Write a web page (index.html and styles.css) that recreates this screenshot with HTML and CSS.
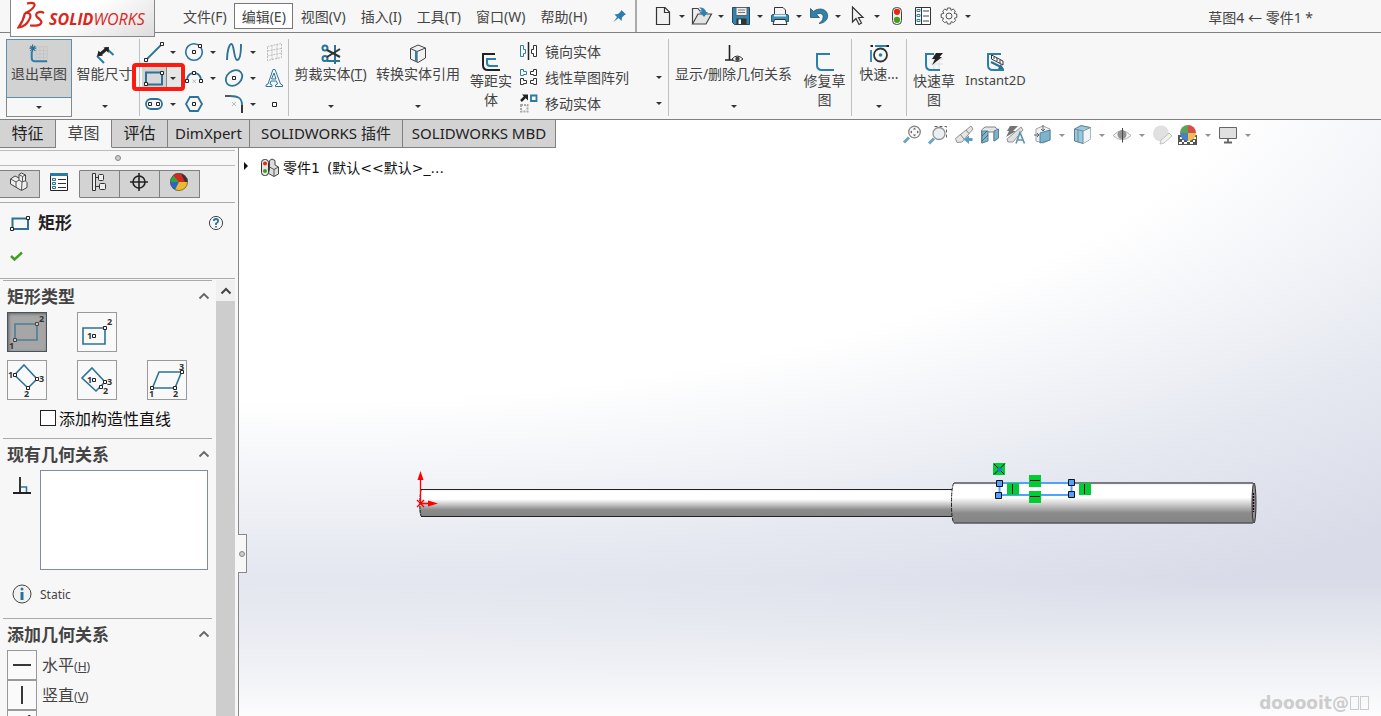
FILE: index.html
```html
<!DOCTYPE html>
<html lang="zh-CN">
<head>
<meta charset="utf-8">
<title>草图4 ← 零件1 *</title>
<link rel="stylesheet" href="styles.css">
</head>
<body>
<header class="topbar">
  <div class="logo">
    <svg width="28" height="28" viewBox="16 1 28 28" fill="none" stroke="#d9271c" stroke-width="2.2"><path d="M26 3.5C31 2 35 3 33 6.500C31 9.500 27 12 24 13C29 12 31 15 28 20C26 24 22 27 17.500 27.500C20 24 23 18 24 13"/><path d="M43 13C39 10.500 33 13 36 17C40 20 42 22 39 24.500C36 26.500 32 25.500 29 25.500"/></svg>
    <span class="brand"><b>SOLID</b>WORKS</span>
  </div>
  <nav class="menu">
    <button>文件(F)</button><button class="boxed">编辑(E)</button><button>视图(V)</button><button>插入(I)</button><button>工具(T)</button><button>窗口(W)</button><button>帮助(H)</button>
  </nav>
  <button class="pin" aria-label="固定"><svg width="14" height="14" viewBox="614 10 14 14"><path fill="#2a7fae" d="M622.500 11L627 15.500L625.500 16L623 18.500L622.500 22L619.500 19L614.500 23L618 18L615.500 15.500L619 15L621.700 12.500Z"/></svg></button>
  <div class="quick">
    <button aria-label="新建"><svg width="20" height="20" viewBox="653 7 20 20"><path d="M656.500 8.500H665L669.500 13V25.500H656.500ZM664.500 8.500V13.500H669.500" fill="#f1f1f1" stroke="#333" stroke-width="1.200"/></svg></button><i class="caret"></i>
    <button aria-label="打开"><svg width="22" height="20" viewBox="691 7 22 20"><path d="M692.500 25V9.500H698L700 12H705V15" fill="#eee" stroke="#444" stroke-width="1.200"/><path d="M692.500 25L698 15H711.500L706 25Z" fill="#e5e5e5" stroke="#444" stroke-width="1.200"/><path d="M699 8.500C704 8.500 705.500 10.500 705.500 13H708L704 18L699.500 13H702C702 11 701 10 699 8.500Z" fill="#2a84b3"/></svg></button><i class="caret"></i>
    <button aria-label="保存"><svg width="20" height="20" viewBox="731 7 20 20"><path d="M732.500 8.500H749.500V25.500H734.500L732.500 23.500Z" fill="#3484ad" stroke="#1f4960"/><path d="M736 8.500H747V16.500H736Z" fill="#eee" stroke="#58656c"/><path d="M738 11H745M738 13.500H745" stroke="#777"/><path d="M736.500 19.500H746.500V25.500H736.500Z" fill="#333"/><path d="M738.500 20.500H741V25H738.500Z" fill="#fff"/></svg></button><i class="caret"></i>
    <button aria-label="打印"><svg width="20" height="20" viewBox="770 7 20 20"><path d="M774.500 16V8.500H783L785.500 11V16" fill="#f5f5f5" stroke="#333"/><path d="M771.500 17Q771.500 15.500 773 15.500H787Q788.500 15.500 788.500 17V22.500H771.500Z" fill="#3b90ba" stroke="#1e5d7d"/><path d="M774 15.500H786V17.500H774Z" fill="#e7f3f9"/><path d="M774.500 20.500H785.500L787 25.500H773Z" fill="#f8f8f8" stroke="#333"/></svg></button><i class="caret"></i>
    <button aria-label="撤消"><svg width="20" height="20" viewBox="809 7 20 20"><path d="M810.500 9.500V18.500H819.500L816.500 15.500C820 13 824 15 823 19C822.500 21.500 821 23 819 24.500C825 24 828.500 20 827.500 15.500C826.500 10 819 8 813.500 12.500Z" fill="#3181a8" stroke="#23566f" stroke-width=".8"/></svg></button><i class="caret"></i>
    <button aria-label="选择"><svg width="20" height="20" viewBox="848 7 20 20"><path d="M852.500 8V23L856 19.500L859 25.500L861.500 24L858.500 18.500H863Z" fill="#f3f3f3" stroke="#333" stroke-width="1.200"/></svg></button><i class="caret"></i>
    <button aria-label="重建"><svg width="20" height="20" viewBox="888 7 20 20"><rect x="893.500" y="8.500" width="9" height="17" rx="4" fill="#eee" stroke="#444"/><circle cx="898" cy="12.800" r="3.100" fill="#e52a10"/><circle cx="898" cy="20.800" r="3.100" fill="#3fa01d"/></svg></button>
    <button class="wide" aria-label="选项列表"><svg width="20" height="20" viewBox="914 7 20 20"><path d="M916.500 8.500H931.500V25.500H916.500ZM922.500 8.500V25.500" fill="#fff" stroke="#333"/><path d="M918 10.500H921V12.500H918ZM918 15.500H921V17.500H918ZM918 20.500H921V22.500H918Z" fill="#fff" stroke="#2b80a8"/><path d="M924 12H930M924 17H930M924 22H930" stroke="#444"/></svg></button>
    <button aria-label="设置"><svg width="20" height="20" viewBox="-10 -10 20 20" fill="none" stroke="#555"><circle r="3"/><path d="M-1.500-8H1.500L2-5.600L4.200-7L6.300-5L5.200-2.600L7.800-2V1.500L5.500 2.200L6.500 4.600L4.500 6.600L2.200 5.600L1.500 8H-1.500L-2.200 5.600L-4.500 6.600L-6.500 4.600L-5.500 2.200L-7.800 1.500V-2L-5.200-2.600L-6.300-5L-4.200-7L-2-5.600Z"/></svg></button><i class="caret"></i>
  </div>
  <h1 class="doc">草图4 ← 零件1 *</h1>
</header>

<section class="ribbon">
  <div class="group">
    <div class="exit">
      <button><svg width="20" height="20" viewBox="28 43 22 22" fill="none"><path d="M36 46H48M36 50H48M36 54H48M36 58H48M36 46V60M40 46V60M44 46V60M48 46V60" stroke="#bbb" stroke-width=".6"/><path d="M31 51V58Q31 62 35 62H48" stroke="#2b7da5" stroke-width="2.200"/><path d="M32 43.500V51.500M28.500 47.500H36M29.500 45L35 50.500M35 45L29.500 50.500" stroke="#2b6f93" stroke-width="1.300"/></svg>退出草图</button>
      <button aria-label="更多"><i class="caret"></i></button>
    </div>
    <button class="big dim"><svg width="20" height="20" viewBox="95 43 20 20"><path d="M97 55L104 62M105.500 46.500L113.500 54" stroke="#2b7ba2" stroke-width="2"/><path d="M97 55.500L98.500 49.500L103 54.500ZM108.500 52L109 46L103.500 46.500Z" fill="#222"/><path d="M100 53.500L107 47.500" stroke="#222" stroke-width="3"/></svg><span>智能尺寸</span><i class="caret"></i></button>
  </div>
  <div class="group sketch">
    <div class="cell"><button aria-label="直线"><svg width="20" height="20" viewBox="144 42 20 20"><path d="M146.500 59.500L162 44" stroke="#2b7398" stroke-width="1.800"/><path d="M144.500 58.500H147.500V61.500H144.500ZM160.500 42.500H163.500V45.500H160.500Z" fill="#fff" stroke="#222"/></svg></button><i class="caret"></i></div>
    <div class="cell"><button aria-label="圆"><svg width="20" height="20" viewBox="184 42 20 20" fill="none"><circle cx="194" cy="52" r="8.300" stroke="#2b7398" stroke-width="1.600"/><path d="M192.500 50.500H195.500V53.500H192.500ZM198.500 44.500H201.500V47.500H198.500Z" fill="#fff" stroke="#222"/></svg></button><i class="caret"></i></div>
    <div class="cell"><button aria-label="样条曲线"><svg width="20" height="20" viewBox="224 42 20 20" fill="none"><path d="M227 60C227 52 229 44 231.500 44S234 60 237 60S241 52 241 44" stroke="#2b7398" stroke-width="1.900"/></svg></button><i class="caret"></i></div>
    <div class="cell"><button aria-label="基准面"><svg width="20" height="20" viewBox="264 42 20 20" fill="none"><path d="M267.500 46.500L281.500 43.500V57.500L267.500 60.500ZM267.500 51L281.500 48.500M267.500 56L281.500 53M272 45.500V60M277 44.500V59" stroke="#bbb" stroke-dasharray="2 1"/></svg></button></div>
    <div class="cell picked"><button aria-label="矩形"><svg width="20" height="20" viewBox="144 68 20 20"><path d="M146 72.500H162V84.500H146Z" fill="#d8d8d8" stroke="#2b7398" stroke-width="2"/><path d="M144.500 82.500H147.500V85.500H144.500ZM160.500 71.500H163.500V74.500H160.500Z" fill="#fff" stroke="#222"/></svg></button><i class="caret"></i></div>
    <div class="cell"><button aria-label="圆弧"><svg width="20" height="20" viewBox="184 68 20 20" fill="none"><path d="M187 79C188 75 190 73 194 73S200 75 201 79" stroke="#2b7398" stroke-width="1.800"/><path d="M185.500 79.500H188.500V82.500H185.500ZM192.500 71.500H195.500V74.500H192.500ZM199.500 79.500H202.500V82.500H199.500Z" fill="#fff" stroke="#222"/><path d="M192.500 79.500L196 83M196 79.500L192.500 83" stroke="#bbb"/></svg></button><i class="caret"></i></div>
    <div class="cell"><button aria-label="椭圆"><svg width="20" height="20" viewBox="224 68 20 20" fill="none"><ellipse cx="234" cy="78" rx="9" ry="7" transform="rotate(-40 234 78)" stroke="#2b7398" stroke-width="1.800"/><path d="M232.500 76.500H235.500V79.500H232.500Z" fill="#fff" stroke="#222"/></svg></button><i class="caret"></i></div>
    <div class="cell"><button aria-label="文字"><svg width="20" height="20" viewBox="264 68 20 20" fill="#fff" stroke="#2b7398" stroke-width="1"><path d="M266 86.500V85L268 84L273 69.500H275L280.500 84L282.500 85V86.500H275.500V85L277.500 84L276.500 81H271L270 84L272 85V86.500ZM271.500 79H276L274 73Z"/></svg></button></div>
    <div class="cell"><button aria-label="槽口"><svg width="20" height="20" viewBox="144 94 20 20"><rect x="146" y="99" width="16" height="10" rx="5" fill="none" stroke="#2b7398" stroke-width="1.800"/><path d="M148.500 102.500H151.500V105.500H148.500ZM156.500 102.500H159.500V105.500H156.500Z" fill="#fff" stroke="#222"/></svg></button><i class="caret"></i></div>
    <div class="cell"><button aria-label="多边形"><svg width="20" height="20" viewBox="184 94 20 20"><path d="M190 97H198L202 104L198 111H190L186 104Z" fill="none" stroke="#2b7398" stroke-width="1.800"/><path d="M192.500 102.500H195.500V105.500H192.500Z" fill="#fff" stroke="#222"/></svg></button></div>
    <div class="cell"><button aria-label="圆角"><svg width="20" height="20" viewBox="224 94 20 20" fill="none"><path d="M225 96H230" stroke="#222" stroke-width="1.500"/><path d="M230 96C238 96 242 98 242 105" stroke="#2b7398" stroke-width="1.800"/><path d="M242 105V113" stroke="#222" stroke-width="1.800"/><path d="M232 102L236 106M236 102L232 106" stroke="#bbb"/></svg></button><i class="caret"></i></div>
    <div class="cell"><button aria-label="点"><svg width="20" height="20" viewBox="264 94 20 20"><path d="M272.500 102.500H276.500V106.500H272.500Z" fill="#fff" stroke="#222"/></svg></button></div>
  </div>
  <div class="group">
    <button class="big trim"><svg width="20" height="20" viewBox="320 44 20 20" fill="none"><path d="M334 45V64M326 61H339" stroke="#2b7398" stroke-width="2"/><circle cx="324" cy="48" r="2.500" stroke="#2b7398" stroke-width="2"/><circle cx="324" cy="58.500" r="2.500" stroke="#2b7398" stroke-width="2"/><path d="M326 50L339 57M326 57L339 49" stroke="#333" stroke-width="2"/></svg><span>剪裁实体(<u>T</u>)</span><i class="caret"></i></button>
    <button class="big conv"><svg width="20" height="20" viewBox="408 44 20 20"><path d="M410.500 48.500L418 45L425.500 48V58L418 62.500L410.500 59Z" fill="#f1f1f1" stroke="#444"/><path d="M410.500 48.500L417 51.500L425.500 48M417 51.500V62" fill="none" stroke="#444"/><path d="M416 51L416 62" stroke="#2b80ab" stroke-width="2"/></svg><span>转换实体引用</span><i class="caret"></i></button>
    <button class="big tall off"><svg width="20" height="20" viewBox="481 50 20 20" fill="none"><path d="M495 53H483V64Q483 69 488 69H500" stroke="#222" stroke-width="2"/><path d="M496 58H487V62Q487 65 490 65H498" stroke="#2b80ab" stroke-width="2"/></svg><span>等距实体</span></button>
    <div class="list">
      <div><button><svg width="18" height="20" viewBox="520 42 18 20" fill="#fff"><path d="M528.500 43V61" stroke="#222" stroke-width="1.500"/><path d="M520.500 46.500H523.500V50.500H525.500V54.500H523.500V57.500H520.500Z" stroke="#2b80ab"/><path d="M536.500 46.500H533.500V50.500H531.500V54.500H533.500V57.500H536.500Z" stroke="#333"/></svg>镜向实体</button></div>
      <div><button><svg width="18" height="20" viewBox="520 68 18 20" fill="#fff" stroke="#333"><path d="M520.500 70.500H523.500V72.500H526.500V75.500H523.500V76.500H520.500Z" stroke="#2b80ab"/><path d="M536.500 70.500H533.500V72.500H530.500V75.500H533.500V76.500H536.500ZM520.500 79.500H523.500V81.500H526.500V84.500H523.500V85.500H520.500ZM536.500 79.500H533.500V81.500H530.500V84.500H533.500V85.500H536.500Z"/></svg>线性草图阵列</button><i class="caret"></i></div>
      <div><button><svg width="18" height="20" viewBox="520 94 18 20" fill="none"><path d="M521 102L526 97" stroke="#222" stroke-width="2.500"/><path d="M522 95.500H528V101.500Z" fill="#222"/><path d="M531 96.500H536.500V102H531Z" stroke="#2b7ba2" stroke-width="1.800"/><path d="M521 106H527.500V112.500H521Z" stroke="#aaa" stroke-width="2" stroke-dasharray="2 1"/></svg>移动实体</button><i class="caret"></i></div>
    </div>
  </div>
  <div class="group">
    <button class="big disp"><svg width="20" height="20" viewBox="723 44 20 20" fill="none"><path d="M728.500 45V60M724 60H733" stroke="#222" stroke-width="1.600"/><path d="M731 59Q736 53 742 59Q736 64 731 59Z" fill="#fff" stroke="#333"/><circle cx="736.500" cy="58.800" r="2.200" fill="#444"/></svg><span>显示/删除几何关系</span><i class="caret"></i></button>
    <button class="big tall fix"><svg width="20" height="20" viewBox="813 50 20 20" fill="none"><path d="M828 53H815V64Q815 69 820 69H832" stroke="#2b80ab" stroke-width="2"/></svg><span>修复草图</span></button>
  </div>
  <div class="group">
    <button class="big fast"><svg width="20" height="20" viewBox="867 44 20 20" fill="none"><path d="M869 50V62M873 46H886" stroke="#2b80ab" stroke-width="1.800"/><path d="M868.500 46H871M884.500 46H887" stroke="#222" stroke-width="2"/><circle cx="878.500" cy="55" r="6.500" stroke="#333" stroke-width="1.800"/><circle cx="878.500" cy="55" r="1.800" fill="#2b80ab"/></svg><span>快速...</span><i class="caret"></i></button>
  </div>
  <div class="group last">
    <button class="big tall off"><svg width="20" height="20" viewBox="923 50 20 20" fill="none"><path d="M930 58H942M930 63H942M933 54V69M938 54V69" stroke="#ddd"/><path d="M933 53H925V64Q925 69 930 69H939" stroke="#2b80ab" stroke-width="2"/><path d="M935 52H942L938.500 56H941L931 64L934 58H931Z" fill="#222"/></svg><span>快速草图</span></button>
    <button class="big tall inst"><svg width="20" height="20" viewBox="984 50 20 20" fill="none"><path d="M999 53H986V64Q986 69 991 69H1002" stroke="#2b80ab" stroke-width="2"/><path d="M989.500 54L1001 60V64L989.500 58ZM992 56V58M995 57V60M998 59V62" fill="#fff" stroke="#333"/><path d="M989 61L999 66" stroke="#2b6f93" stroke-width="2"/><path d="M1002 68L996 68L998.500 63Z" fill="#2b6f93"/></svg><span>Instant2D</span></button>
  </div>
</section>

<main class="work">
  <div class="strip">
    <nav class="tabs"><button>特征</button><button class="on">草图</button><button>评估</button><button class="latin dx">DimXpert</button><button class="latin addin">SOLIDWORKS 插件</button><button class="latin addin">SOLIDWORKS MBD</button></nav>
    <div class="views">
      <button aria-label="整屏显示"><svg width="22" height="22" viewBox="901 124 22 22"><path d="M904 142.500L909 137.500" stroke="#5b9cbd" stroke-width="3"/><circle cx="914.500" cy="132" r="5.800" fill="#f6f8f8" stroke="#777" stroke-width="1.300"/><path d="M914.500 127.500L916 129.500H913ZM914.500 136.500L916 134.500H913ZM910 132L912 130.500V133.500ZM919 132L917 130.500V133.500Z" fill="#555"/></svg></button>
      <button aria-label="局部放大"><svg width="22" height="22" viewBox="927 124 22 22"><path d="M934.500 126.500H946.500V138.500" fill="none" stroke="#555" stroke-dasharray="3 2"/><path d="M929 143.500L934 138.500" stroke="#5b9cbd" stroke-width="3"/><circle cx="939" cy="133.500" r="6" fill="#e7eef2" stroke="#888" stroke-width="1.300"/></svg></button>
      <button aria-label="上一视图"><svg width="22" height="22" viewBox="953 124 22 22"><path d="M971 126L973 129L962 142L957 142.500L955.500 138.500Z" fill="#e2e2e2" stroke="#888"/><path d="M960 134L964 139M966 130L969 133.500" stroke="#777"/><path d="M972.500 138V141H969V144L963.500 139.500L969 135.500V138Z" fill="#4b93b8"/></svg></button>
      <button aria-label="剖面视图"><svg width="22" height="22" viewBox="979 124 22 22"><path d="M981.500 130L985 127H995L998.500 130V138L994 141V132H987V141L981.500 143Z" fill="#e3e3e3" stroke="#777"/><path d="M982 131H988V141L982 143ZM994 131L998.500 129V138L994 141Z" fill="#72abc7" stroke="#4a7387"/><path d="M982 136L987 131M982 141L988 135" stroke="#315e75"/></svg></button>
      <button aria-label="动态注解"><svg width="22" height="22" viewBox="1005 124 22 22"><path d="M1010 126H1018L1013 131H1016L1006 137L1009 131H1007Z" fill="#666"/><path d="M1021 127L1023 130L1013 142L1008 142L1007 139Z" fill="#ddd" stroke="#888"/><path d="M1016 143.500L1020 132.500L1024.500 143.500M1018 140H1023" fill="none" stroke="#4b86a5" stroke-width="1.600"/></svg></button>
      <button aria-label="视图定向"><svg width="22" height="22" viewBox="1031 124 22 22"><path d="M1036 129L1043 126L1050 129V140L1043 143L1036 141Z" fill="#edf1f4" stroke="#999"/><path d="M1040 133L1050 130V140L1040 143Z" fill="#72abc7" stroke="#397998"/><path d="M1043 125V131M1041 129L1043 131L1045 129M1034 135H1039M1037 133L1039 135L1037 137" fill="none" stroke="#555"/></svg></button><i class="caret"></i>
      <button aria-label="显示样式"><svg width="22" height="22" viewBox="1071 124 22 22"><path d="M1074.500 129L1081 125.500L1090.500 127.500V139L1083 143.500L1074.500 141Z" fill="#8cc3db" stroke="#506d7b"/><path d="M1083 130L1090.500 127.500V139L1083 143.500Z" fill="#eef5f8"/><path d="M1074.500 129L1083 131L1090.500 127.500M1083 131V143M1078 130V142" fill="none" stroke="#5c7f90"/></svg></button><i class="caret"></i>
      <button aria-label="隐藏所有类型"><svg width="22" height="22" viewBox="1111 124 22 22"><path d="M1113 135.500Q1122 126.500 1131 135.500Q1122 144 1113 135.500Z" fill="#f4f4f4" stroke="#aaa"/><circle cx="1122" cy="134.500" r="4.500" fill="#888"/><path d="M1122.500 128V142.500" stroke="#333"/></svg></button><i class="caret"></i>
      <button aria-label="编辑外观"><svg width="22" height="22" viewBox="1151 124 22 22"><circle cx="1161" cy="133.500" r="8" fill="#ddd"/><path d="M1165 137L1169 133L1172 136L1164 143L1160 144L1161 140Z" fill="#f1f1f1" stroke="#bbb"/></svg></button>
      <button aria-label="应用布景"><svg width="22" height="22" viewBox="1177 124 22 22"><path d="M1178 135H1197V145H1178Z" fill="#444"/><path d="M1180 137H1182V139H1180ZM1179 142H1182V144H1179ZM1184 142H1187V144H1184ZM1190 142H1193V144H1190ZM1194 137H1196V139H1194ZM1187 140H1190V142H1187ZM1193 140H1195V142H1193ZM1182 140H1184V142H1182Z" fill="#fff"/><path d="M1188 133V125A8 8 0 0 0 1180 133Z" fill="#4a9a48"/><path d="M1188 133V125A8 8 0 0 1 1196 133Z" fill="#d53a32"/><path d="M1188 133H1180A8 8 0 0 0 1188 141Z" fill="#396fc2"/><path d="M1188 133H1196A8 8 0 0 1 1188 141Z" fill="#eab93b"/></svg></button><i class="caret"></i>
      <button aria-label="视图设定"><svg width="22" height="22" viewBox="1217 124 22 22"><path d="M1219.500 127.500H1236.500V138.500H1219.500Z" fill="#ddd" stroke="#555"/><path d="M1228 139V142M1224 142.500H1232" stroke="#555" stroke-width="1.800"/></svg></button><i class="caret"></i>
    </div>
  </div>

  <div class="body">
    <aside class="panel">
      <div class="grip"><i class="dot"></i></div>
      <nav class="modes">
        <button aria-label="设计树"><svg width="20" height="20" viewBox="9 172 20 20"><path d="M10.500 179L15 176L19 178V174.500L21.500 173L25.500 175V181L27 182.500V187.500L21.500 190.500L10.500 184Z" fill="#eee" stroke="#444"/><path d="M10.500 179L16 182L19 180V178M16 182V187M19 180L22 182L21.500 190M22 182L26 180.500M19 174.500L22.500 176.500L25.500 175M22.500 176.500V181.500" fill="none" stroke="#555"/></svg></button>
        <button class="on" aria-label="属性"><svg width="20" height="20" viewBox="48 172 20 20"><path d="M49.500 173.500H66.500V190.500H49.500Z" fill="#fff" stroke="#222"/><path d="M49 173H67V176H49Z" fill="#2b7ba2"/><path d="M51.500 178.500H54.500V180.500H51.500ZM51.500 182.500H54.500V184.500H51.500ZM51.500 186.500H54.500V188.500H51.500Z" fill="#fff" stroke="#2b6f93"/><path d="M57 179.500H65M57 183.500H65M57 187.500H65" stroke="#333"/></svg></button>
        <button aria-label="配置"><svg width="20" height="20" viewBox="88 172 20 20" fill="#eee" stroke="#333"><path d="M91.500 173.500H94.500V190.500H91.500Z"/><path d="M94.500 177.500H97M94.500 186.500H99" /><rect x="97.500" y="174.500" width="5" height="6" rx="1"/><rect x="98.500" y="183.500" width="6" height="6" rx="1"/></svg></button>
        <button aria-label="尺寸专家"><svg width="20" height="20" viewBox="128 172 20 20" fill="none" stroke="#222" stroke-width="1.600"><circle cx="138" cy="182" r="6"/><path d="M138 173V191M129 182H147"/></svg></button>
        <button aria-label="外观"><svg width="20" height="20" viewBox="168 171 20 20"><path d="M178 181L178 172A9 9 0 0 0 169 181Z" fill="#37a339"/><path d="M178 181V172A9 9 0 0 1 187 181Z" fill="#333"/><path d="M178 181H169A9 9 0 0 0 178 190Z" fill="#2a65c8"/><path d="M178 181H187A9 9 0 0 1 174 189Z" fill="#edba2c"/><path d="M172 174A9 9 0 0 1 180 172.500L184 181H178Z" fill="#d8271e"/><circle cx="178" cy="181" r="8.500" fill="none" stroke="#555" stroke-width=".7"/></svg></button>
      </nav>
      <div class="heading">
        <div class="name"><svg width="20" height="16" viewBox="10 215 20 16"><path d="M12.500 218.500H28V229H12.500Z" fill="none" stroke="#2b7398" stroke-width="2"/><path d="M10.500 227.500H13.500V230.500H10.500ZM26.500 216.500H29.500V219.500H26.500Z" fill="#fff" stroke="#222"/></svg><h2>矩形</h2>
        <button aria-label="帮助"><svg width="16" height="16" viewBox="208 215 16 16"><circle cx="216" cy="223" r="6.600" fill="#f5f5f5" stroke="#444"/><path d="M213.800 221Q214 219 216 219T218.200 221Q218 222.500 216 223.500V225M216 226V227.500" fill="none" stroke="#2b7398" stroke-width="1.800"/></svg></button></div>
        <button class="ok" aria-label="确定"><svg width="14" height="12" viewBox="9 250 14 12"><path d="M10 256L13.500 259.500L21 252.500" fill="none" stroke="#3fa21f" stroke-width="2.500"/></svg></button>
      </div>
      <div class="scroller">
        <div class="props">
          <section>
            <h3>矩形类型<svg width="12" height="8" viewBox="0 0 12 8"><path d="M1.500 6.500L6 2L10.500 6.500" fill="none" stroke="#666" stroke-width="1.800"/></svg></h3>
            <div class="types">
              <button class="on" aria-label="边角矩形"><svg width="38" height="38" viewBox="8 313 38 38"><path d="M15 324H37V340H15Z" fill="none" stroke="#4e7d97" stroke-width="1.600"/><path d="M13.500 338.500H16.500V341.500H13.500ZM35.500 322.500H38.500V325.500H35.500Z" fill="#ccc" stroke="#444"/><text x="39" y="322">2</text><text x="9" y="349">1</text></svg></button>
              <button aria-label="中心矩形"><svg width="38" height="38" viewBox="78 313 38 38"><path d="M83 328H105V344H83Z" fill="none" stroke="#2b7398" stroke-width="1.600"/><path d="M92.500 334.500H95.500V337.500H92.500ZM103.500 326.500H106.500V329.500H103.500Z" fill="#fff" stroke="#222"/><text x="107" y="325">2</text><text x="87" y="339">1</text></svg></button>
              <i></i>
              <button aria-label="三点边角矩形"><svg width="38" height="38" viewBox="8 361 38 38"><path d="M24 365L37 379L28 388L14.500 375Z" fill="none" stroke="#2b7398" stroke-width="1.600"/><path d="M13.500 373.500H16.500V376.500H13.500ZM35.500 377.500H38.500V380.500H35.500ZM26.500 386.500H29.500V389.500H26.500Z" fill="#fff" stroke="#222"/><text x="8" y="378">1</text><text x="39" y="382">3</text><text x="24" y="397">2</text></svg></button>
              <button aria-label="三点中心矩形"><svg width="38" height="38" viewBox="78 361 38 38"><path d="M92 368L105 382L96 391L82 378Z" fill="none" stroke="#2b7398" stroke-width="1.600"/><path d="M92.500 378.500H95.500V381.500H92.500ZM103.500 380.500H106.500V383.500H103.500ZM99.500 385.500H102.500V388.500H99.500Z" fill="#fff" stroke="#222"/><text x="87" y="383">1</text><text x="107" y="385">3</text><text x="103" y="394">2</text></svg></button>
              <button aria-label="平行四边形"><svg width="38" height="38" viewBox="148 361 38 38"><path d="M152.500 388L159 372H181.500L175 388Z" fill="none" stroke="#2b7398" stroke-width="1.600"/><path d="M150.500 386.500H153.500V389.500H150.500ZM180.500 370.500H183.500V373.500H180.500ZM173.500 386.500H176.500V389.500H173.500Z" fill="#fff" stroke="#222"/><text x="149" y="397">1</text><text x="179" y="370">3</text><text x="173" y="397">2</text></svg></button>
            </div>
            <label class="check"><input type="checkbox">添加构造性直线</label>
          </section>
          <section>
            <h3>现有几何关系<svg width="12" height="8" viewBox="0 0 12 8"><path d="M1.500 6.500L6 2L10.500 6.500" fill="none" stroke="#666" stroke-width="1.800"/></svg></h3>
            <div class="rel"><svg width="20" height="32" viewBox="12 470 20 32"><path d="M20 477V493M13 493H31" stroke="#222" stroke-width="1.800"/><path d="M21 487H26.500V492" fill="none" stroke="#2b7ba2" stroke-width="1.600"/></svg><div class="listbox" role="listbox" aria-label="现有几何关系"></div></div>
            <div class="info"><svg width="20" height="20" viewBox="0 0 20 20"><circle cx="10" cy="10" r="9" fill="#f1f1f1" stroke="#444"/><circle cx="10" cy="5" r="1.500" fill="#2b7ba2"/><path d="M10 8V16" stroke="#2b6f93" stroke-width="3"/></svg>Static</div>
          </section>
          <section>
            <h3>添加几何关系<svg width="12" height="8" viewBox="0 0 12 8"><path d="M1.500 6.500L6 2L10.500 6.500" fill="none" stroke="#666" stroke-width="1.800"/></svg></h3>
            <button class="add"><span class="ic"><svg width="20" height="20" viewBox="0 0 20 20"><path d="M1 10H19" stroke="#222" stroke-width="1.800"/></svg></span><span class="lbl">水平<small>(<u>H</u>)</small></span></button>
            <button class="add"><span class="ic"><svg width="20" height="20" viewBox="0 0 20 20"><path d="M10 1V19" stroke="#222" stroke-width="1.800"/></svg></span><span class="lbl">竖直<small>(<u>V</u>)</small></span></button>
            <button class="add" aria-label="共线"><span class="ic"><svg width="20" height="20" viewBox="0 0 20 20"><path d="M18 0L2 16" stroke="#222" stroke-width="1.800"/></svg></span></button>
          </section>
        </div>
        <div class="bar"><button aria-label="向上滚动"><svg width="12" height="8" viewBox="0 0 12 8"><path d="M1.500 6.500L6 2L10.500 6.500" fill="none" stroke="#444" stroke-width="2"/></svg></button></div>
      </div>
      <div class="handle"><i class="dot"></i></div>
    </aside>

    <div class="stage">
      <div class="tree"><svg class="tri" width="6" height="10" viewBox="0 0 6 10"><path d="M1 1L5 5L1 9Z" fill="#111"/></svg><svg width="20" height="20" viewBox="260 157 20 20"><rect x="261.500" y="158.500" width="7" height="16" rx="3" fill="#e5e5e5" stroke="#333"/><circle cx="265" cy="162.500" r="2" fill="#e52a10"/><circle cx="265" cy="170" r="2" fill="#3fa01d"/><path d="M269.500 168V159.500L272 158L275 159.500V164L278.500 166V173L274 175.500L268.500 172.500Z" fill="#ddd" stroke="#444"/><path d="M269.500 166L274 168.500L278.500 166M274 168.500V175" fill="none" stroke="#555"/></svg>零件1&ensp;(默认&lt;&lt;默认&gt;_...</div>
      <svg class="model" viewBox="239 148 1142 568" preserveAspectRatio="xMinYMin meet">
        <defs><linearGradient id="steel" x1="0" y1="0" x2="0" y2="1"><stop offset="0" stop-color="#eee"/><stop offset=".08" stop-color="#fff"/><stop offset=".36" stop-color="#fff"/><stop offset=".55" stop-color="#c8c8c8"/><stop offset=".75" stop-color="#8b8b8b"/><stop offset="1" stop-color="#858585"/></linearGradient></defs>
        <path d="M421 489.500H952V516.500H421Q418.500 513 419.500 503Q418.500 494 421 489.500Z" fill="url(#steel)"/>
        <path d="M421 489.500H952M421 516.500H952" stroke="#222"/>
        <path d="M421 490Q418.500 503 421 516" fill="none" stroke="#222" stroke-dasharray="3 1"/>
        <path d="M954 483H1253Q1256 487 1256 503T1253 523H954Q951.500 519 951.500 503T954 483Z" fill="url(#steel)"/>
        <path d="M954 483H1253M954 523H1253" stroke="#55555d" stroke-width="1.600"/>
        <path d="M954 483Q951.500 486 951.500 503T954 523" fill="none" stroke="#222" stroke-dasharray="4 1"/>
        <ellipse cx="1254" cy="503" rx="2" ry="20" fill="#988e98" stroke="#333"/><path d="M1253.500 493V512" stroke="#111" stroke-width="1.500" stroke-dasharray="2 1"/>
        <path d="M420.500 503V475M420 503.500H434M417 500L424 507M424 500L417 507" stroke="#f00" stroke-width="1.300"/>
        <path d="M420.500 471L423.500 480H417.500ZM438 503.500L428 500.500V506.500Z" fill="#f00"/>
        <path d="M999.500 483H1071.500V495H999.500Z" fill="#fff" stroke="#4da3ff" stroke-width="2"/>
        <path d="M993 463H1005V475H993ZM1007 483H1019V495H1007ZM1029 475H1041V487H1029ZM1029 491H1041V503H1029ZM1079 483H1091V495H1079Z" fill="#00cc33"/>
        <path d="M994 474.500L1005 463.500M994 464L1004 474M1012.500 484V494M1084.500 484V494M1030 480.500H1040M1030 496.500H1040" stroke="#111"/>
        <circle cx="999.500" cy="469.500" r="2.300" fill="#2a72e5"/>
        <path d="M996.500 480.500H1002.500V486.500H996.500ZM995.500 492.500H1001.500V498.500H995.500ZM1068.500 479.500H1074.500V485.500H1068.500ZM1068.500 491.500H1074.500V497.500H1068.500Z" fill="#4da3ff" stroke="#111"/>
      </svg>
      <div class="mark">dooooit@<i></i><i></i></div>
    </div>
  </div>
</main>
</body>
</html>
```

FILE: styles.css
```css
*, *::before, *::after { box-sizing: border-box; }
body {
  margin: 0;
  height: 100vh;
  display: flex;
  flex-direction: column;
  overflow: hidden;
  background: #f7f7f7;
  color: #444;
  font-family: "Noto Sans", "Noto Sans CJK SC", sans-serif;
  font-size: 14px;
}
button {
  margin: 0;
  padding: 0;
  border: 0;
  background: none;
  color: inherit;
  font: inherit;
}
svg { display: block; flex: none; }
h1, h2, h3 { margin: 0; }
.caret {
  display: block;
  flex: none;
  width: 0;
  height: 0;
  border: 3px solid transparent;
  border-top-color: #333;
  border-bottom: 0;
}

.topbar {
  position: relative;
  z-index: 2;
  flex: none;
  display: flex;
  align-items: center;
  height: 33px;
  border-bottom: 1px solid #808080;
}
.logo {
  position: absolute;
  left: 10px;
  top: 0;
  display: flex;
  align-items: center;
  gap: 4px;
  width: 145px;
  height: 37px;
  padding: 0 0 4px 6px;
  border: 1px solid #888;
  border-top: 0;
  background: linear-gradient(150deg, #fff 45%, #ddd);
}
.logo svg { margin-top: -3px; }
.brand {
  padding-top: 6px;
  color: #d9271c;
  font: italic 16px/20px "Open Sans", sans-serif;
}
.menu { display: flex; margin-left: 175px; }
.menu button {
  height: 26px;
  padding: 1px 6px 0 7px;
  border: 1px solid transparent;
  line-height: 22px;
  white-space: nowrap;
}
.menu .boxed { background: #fff; border-color: #777; }
.pin { margin-left: 19px; }
.quick {
  display: flex;
  align-items: center;
  align-self: stretch;
  margin-left: 8px;
  padding-left: 14px;
  border-left: 2px solid #aaa;
}
.quick button, .cell button { display: grid; place-items: center; width: 24px; height: 24px; }
.quick .wide { width: 28px; }
.quick .caret { margin: 0 5px 0 4px; }
.doc { margin: 0 68px 0 auto; padding-top: 1px; font-size: 14px; font-weight: 400; }

.ribbon { flex: none; display: flex; height: 87px; border-bottom: 1px solid #808080; }
.group { position: relative; display: flex; padding-right: 1px; }
.group::after {
  content: "";
  position: absolute;
  right: 0;
  top: 6px;
  bottom: 3px;
  width: 1px;
  background: #c0c0c0;
}
.group.last::after { display: none; }
.exit { width: 66px; margin: 6px 0 2px 6px; display: flex; flex-direction: column; }
.exit button { display: flex; flex-direction: column; align-items: center; }
.exit button:first-child {
  height: 59px;
  padding-top: 4px;
  border: 1px solid #5d8fad;
  background: #d2d2d2;
  line-height: 20px;
}
.exit button:last-child { flex: 1; justify-content: center; border: 1px solid #888; border-top: 0; }
.big {
  display: flex;
  flex-direction: column;
  align-items: center;
  padding-top: 11px;
  line-height: 20px;
  white-space: nowrap;
}
.big .caret { margin: auto 0 11px; }
.tall { padding: 18px 5px 0; line-height: 19px; white-space: normal; }
.dim { width: 67px; padding-right: 2px; }
.trim { width: 83px; }
.conv { width: 92px; }
.off { width: 54px; }
.off span, .fix span { width: 42px; word-break: break-all; }
.disp { width: 129px; }
.fix { width: 53px; }
.fast { width: 54px; }
.inst { width: 69px; font-size: 13px; }
.sketch {
  display: grid;
  grid-template-columns: 40px 40px 40px 26px;
  grid-auto-rows: 26px;
  padding: 6px 1px 0 2px;
}
.cell { display: flex; align-items: center; gap: 4px; }
.picked {
  position: relative;
  background: linear-gradient(90deg, #d2d2d2 24px, #888 24px, #888 25px, #e6e6e6 25px, #e6e6e6 38px, transparent 38px);
}
.picked::before {
  content: "";
  position: absolute;
  left: -10px;
  top: -2px;
  width: 53px;
  height: 28px;
  border: 4px solid #ff1a0f;
  border-radius: 4px;
}
.list { width: 150px; padding-top: 5px; }
.list div { display: flex; align-items: center; justify-content: space-between; height: 26px; padding: 0 6px 0 2px; }
.list button { display: flex; align-items: center; gap: 7px; }

.work {
  flex: 1;
  min-height: 0;
  display: flex;
  flex-direction: column;
  background:
    linear-gradient(180deg, rgba(255, 255, 255, 0) 77%, rgba(255, 255, 255, .92) 100%),
    radial-gradient(ellipse 110% 100% at 22% -15%, #fff 62%, #e5e8f0 90%, #d9dce8 110%);
}
.strip { flex: none; display: flex; align-items: center; height: 28px; }
.tabs { display: flex; }
.tabs button {
  width: 56px;
  height: 28px;
  border: solid #808080;
  border-width: 0 1px 1px 0;
  background: #d3d3d3;
  color: #222;
  font-size: 16px;
  line-height: 24px;
  padding-bottom: 2px;
  white-space: nowrap;
}
.tabs .on { background: #f7f7f7; border-bottom-color: #f7f7f7; color: #444; }
.tabs .latin { font-size: 15px; }
.tabs .dx { width: 82px; }
.tabs .addin { width: 153px; }
.views { display: flex; align-items: center; margin: 0 126px 0 auto; padding-top: 2px; opacity: .9; }
.views button { display: grid; place-items: center; width: 26px; height: 26px; }
.views .caret { margin: 0 4px; border-top-color: #888; }

.body { flex: 1; min-height: 0; display: flex; }
.panel {
  position: relative;
  flex: none;
  display: flex;
  flex-direction: column;
  width: 239px;
  padding: 2px 3px 0 0;
  border-right: 1px solid #888;
  background: #f7f7f7;
}
.dot { width: 6px; height: 6px; border: 1px solid #888; border-radius: 50%; background: #ccc; }
.grip {
  flex: none;
  display: grid;
  place-items: center;
  height: 16px;
  border: solid #bbb;
  border-width: 1px 0;
}
.modes { flex: none; display: flex; height: 37px; padding: 4px 0; border-bottom: 1px solid #aaa; }
.modes button {
  display: grid;
  place-items: center;
  width: 40px;
  padding: 0 2px 5px 0;
  border: 1px solid #808080;
  border-left: 0;
  background: #d3d3d3;
}
.modes .on { border-color: transparent #808080 transparent transparent; background: none; }
.heading { flex: none; height: 76px; border-bottom: 1px solid #aaa; padding: 8px 11px 0 10px; }
.name { display: flex; align-items: center; gap: 8px; height: 24px; }
.name h2 { color: #222; font-size: 17px; line-height: 24px; }
.name button { margin-left: auto; }
.ok { display: block; margin-top: 15px; }
.scroller { flex: 1; min-height: 0; display: flex; padding-top: 1px; overflow: hidden; }
.props { flex: 1; padding: 0 4px 0 3px; }
.props section { border-top: 1px solid #aaa; padding-left: 4px; }
.props h3 {
  display: flex;
  align-items: center;
  justify-content: space-between;
  height: 31px;
  padding: 0 2px 2px 0;
  font-size: 17px;
}
.types { display: grid; grid-template-columns: repeat(3, 70px); gap: 8px 0; margin-right: -8px; }
.types button { width: 40px; height: 40px; border: 1px solid #999; background: #f9f9f9; }
.types .on { border-color: #455560; background: #a6a6a6; box-shadow: inset 1px 1px 3px #666; }
.types svg { overflow: visible; }
.types text { font: bold 9px "Open Sans", sans-serif; fill: #333; }
.check { display: flex; align-items: center; gap: 3px; height: 38px; padding: 0 0 3px 33px; color: #111; font-size: 16px; white-space: nowrap; }
.check input { appearance: none; width: 16px; height: 16px; margin: 0; border: 1px solid #222; background: #fff; }
.rel { display: flex; gap: 8px; padding: 0 4px 0 5px; }
.listbox { flex: 1; height: 100px; border: 1px solid #828ba5; background: #fff; }
.info { display: flex; align-items: center; gap: 8px; height: 48px; padding-left: 5px; font-size: 12px; }
.add { display: flex; align-items: center; height: 30px; font-size: 16px; }
.add .ic { display: grid; place-items: center; width: 30px; height: 30px; margin-right: 5px; border: 1px solid #999; background: #fafafa; }
.add .lbl { padding-bottom: 2px; }
.add small { font-size: 12px; }
.bar { width: 19px; background: #cdcdcd; }
.bar button { display: grid; place-items: center; width: 19px; height: 21px; background: #f0f0f0; }
.handle {
  position: absolute;
  z-index: 1;
  left: 238px;
  top: 386px;
  display: grid;
  place-items: center;
  width: 9px;
  height: 39px;
  border: 1px solid #888;
  border-left: 0;
  background: #f7f7f7;
}
.stage { position: relative; flex: 1; }
.tree {
  display: flex;
  align-items: center;
  gap: 3px;
  padding: 9px 0 0 4px;
  color: #111;
  font: 14px/22px "DejaVu Sans", "Noto Sans CJK SC", sans-serif;
}
.tri { margin: 0 8px 4px 0; }
.model { position: absolute; inset: 0; width: 100%; height: 100%; }
.mark {
  position: absolute;
  right: 12px;
  bottom: 3px;
  display: flex;
  align-items: center;
  color: #ccc;
  font: bold 17px/20px "DejaVu Sans", sans-serif;
}
.mark i { width: 9px; height: 14px; margin-left: 1px; border: 1px solid #ccc; }
```
